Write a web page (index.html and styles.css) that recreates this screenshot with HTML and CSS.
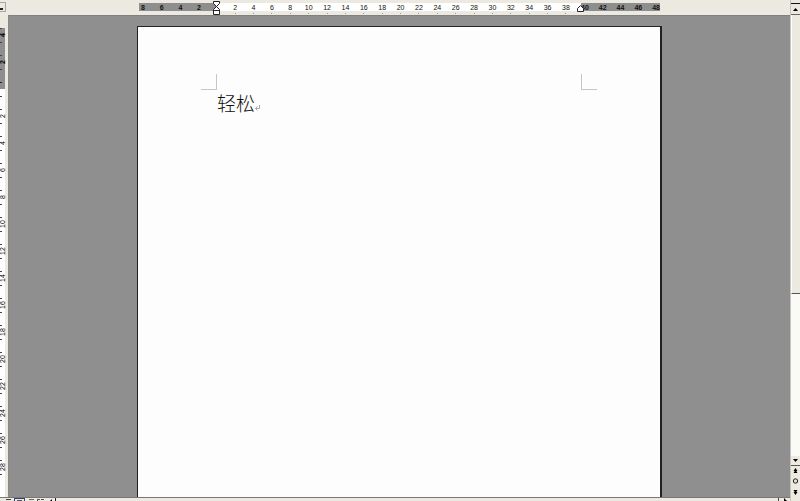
FILE: index.html
```
<!DOCTYPE html>
<html lang="zh-CN">
<head>
<meta charset="UTF-8">
<meta name="viewport" content="width=device-width, initial-scale=1.0">
<title>轻松</title>
<link rel="stylesheet" href="styles.css">
</head>
<body>
    <div class="ruler-row">
        <button class="tab-type" type="button" aria-label="Tab type"></button>
        <div class="ruler">
            <div class="margin left-margin"><span>8</span><span>6</span><span>4</span><span>2</span></div>
            <div class="scale" id="scale"></div>
            <div class="margin right-margin"><span>40</span><span>42</span><span>44</span><span>46</span><span>48</span></div>
            <svg class="indent first" width="7" height="16" viewBox="0 0 7 16">
                <path d="M.5 1.5h6v2l-3 3-3-3zM3.5 6.5l3 3v5h-6v-5zM.5 10.5h6" fill="#fff" stroke="#222"/>
            </svg>
            <svg class="indent last" width="7" height="7" viewBox="0 0 7 7">
                <path d="M3.5.5l3 3v3h-6v-3z" fill="#fff" stroke="#222"/>
            </svg>
        </div>
    </div>

    <div class="workspace">
        <div class="side-ruler">
            <div class="side-margin"><span class="side-mark">4</span><span class="side-mark">2</span></div>
            <div class="side-scale" id="sideScale"></div>
        </div>
        <div class="desk">
            <main class="page">
                <div class="corners"><i class="corner"></i><i class="corner right"></i></div>
                <p class="text">轻松<svg class="mark" width="5" height="6" viewBox="0 0 5 6"><path d="M4.500 0v3.500h-4M2.500 1.500l-2 2 2 2" fill="none" stroke="#aaa"/></svg></p>
            </main>
        </div>
    </div>

    <div class="bottom-bar">
        <div class="views">
            <button type="button" aria-label="Normal view"><svg width="9" height="5"><path d="M2 1.500h5M2 3.500h5" stroke="#444"/></svg></button>
            <button type="button" class="active" aria-label="Page view"><svg width="9" height="5"><path d="M2 1.500h5M2 3.500h5" stroke="#556"/></svg></button>
            <button type="button" aria-label="Outline view"><svg width="9" height="5"><path d="M3 1.500h5M3 3.500h4" stroke="#666"/></svg></button>
            <button type="button" aria-label="Reading view"><svg width="9" height="5"><path d="M1 1.500h3M5 1.500h3M1.500 1v3M5.500 3.500h2" stroke="#555"/></svg></button>
            <button type="button" aria-label="Scroll left"><svg width="9" height="5"><path d="M6 1v4L3 4z"/></svg></button>
        </div>
        <div class="track"></div>
        <button class="scroll-right" type="button" aria-label="Scroll right"><svg width="9" height="5"><path d="M4 1l3 3H4z"/></svg></button>
    </div>

    <div class="scrollbar">
        <div class="split"></div>
        <button type="button" class="up" aria-label="Scroll up"><svg width="7" height="4"><path d="M1 4l2.500-3L6 4z"/></svg></button>
        <div class="thumb"></div>
        <div class="rest"></div>
        <button type="button" class="down" aria-label="Scroll down"><svg width="7" height="4"><path d="M1 0h5L3.500 3z"/></svg></button>
        <button type="button" class="browse" aria-label="Previous page"><svg width="7" height="6"><path d="M1.500 3l2-3 2 3zM1.500 5l2-3 2 3z"/></svg></button>
        <button type="button" class="browse" aria-label="Browse object"><svg width="7" height="6"><circle cx="3.500" cy="3" r="2.200" fill="#ddd" stroke="#222"/></svg></button>
        <button type="button" class="browse" aria-label="Next page"><svg width="7" height="6"><path d="M1.500 1h4l-2 3zM1.500 3h4l-2 3z"/></svg></button>
    </div>

    <script>
        const scale = document.getElementById('scale');
        for (let n = 2; n <= 38; n += 2) {
            const mark = document.createElement('span');
            mark.textContent = n;
            scale.appendChild(mark);
        }

        // the vertical ruler counts every second line, with ticks around each number
        const sideScale = document.getElementById('sideScale');
        for (let n = 2; n <= 28; n += 2) {
            const mark = document.createElement('span');
            mark.className = 'side-mark';
            mark.textContent = n;
            sideScale.appendChild(mark);
        }
    </script>
</body>
</html>
```
FILE: styles.css
```
* {
    box-sizing: border-box;
}

body {
    margin: 0;
    height: 100vh;
    display: grid;
    grid-template-columns: 1fr 10px;
    grid-template-rows: 15px 1fr 4px;
    background: #ece9e1;
    font-family: "Liberation Sans", Arial, sans-serif;
    overflow: hidden;
}

button {
    display: flex;
    align-items: center;
    justify-content: center;
    padding: 0;
    border: none;
    background: #ece9e1;
}

.ruler-row {
    display: flex;
    justify-content: center;
    position: relative;
}

.tab-type {
    position: absolute;
    left: 0;
    top: 2px;
    width: 6px;
    height: 10px;
    border: 1px solid #aaa69e;
    border-left: none;
    justify-content: flex-start;
}

.tab-type::before {
    content: "";
    width: 3px;
    height: 2px;
    margin-top: 4px;
    background: #222;
}

.ruler {
    display: flex;
    position: relative;
    width: 521px;
    height: 8px;
    margin-top: 3px;
    margin-left: 9px;
    font-size: 7px;
    line-height: 9px;
    color: #111;
}

.margin {
    display: flex;
    justify-content: space-between;
    background: #8e8e8e;
}

.left-margin {
    width: 78px;
    padding-left: 2px;
    padding-right: 16px;
    font-weight: bold;
}

.right-margin {
    width: 79px;
    font-weight: bold;
}

.scale {
    flex: 1;
    display: flex;
    padding: 0 6px 0 9px;
    background: #fff;
}

.scale span {
    flex: 1;
    text-align: center;
    height: 11px;
    background: linear-gradient(#999, #999) center bottom / 1px 1px no-repeat;
}

.indent {
    position: absolute;
}

.first {
    left: 74px;
    top: -3px;
}

.last {
    left: 438px;
    top: 2px;
}

.workspace {
    display: flex;
    grid-column: 1;
    min-height: 0;
    overflow: hidden;
}

.side-ruler {
    display: flex;
    flex-direction: column;
    width: 8px;
    padding-top: 13px;
    overflow: hidden;
}

.side-margin {
    display: flex;
    flex: none;
    flex-direction: column;
    justify-content: flex-end;
    width: 5px;
    height: 61px;
    padding-bottom: 13px;
    font-weight: bold;
    background: linear-gradient(#222, #222) left 54px / 2px 1px no-repeat #8e8e8e;
}

.side-margin .side-mark {
    flex: none;
}

.side-scale {
    flex: 1;
    width: 5px;
    padding-top: 14px;
    background: linear-gradient(#444, #444) left 7px / 2px 1px no-repeat #fff;
}

.side-mark {
    display: block;
    width: 5px;
    height: 27px;
    font-size: 7px;
    line-height: 5px;
    text-align: center;
    writing-mode: vertical-rl;
    transform: rotate(180deg);
    background: linear-gradient(#444, #444) right 6px / 2px 1px no-repeat, linear-gradient(#444, #444) right 20px / 2px 1px no-repeat;
}

.desk {
    flex: 1;
    padding: 10px 128px 0;
    background: #8f8f8f;
    border-top: 1px solid #808080;
    border-left: 1px solid #8f8984;
    display: flex;
}

.page {
    flex: 1;
    background: #fdfdfd;
    border: 1px solid #222;
    border-right-width: 2px;
    border-bottom: none;
    padding: 47px 63px 0;
}

.corners {
    display: flex;
    justify-content: space-between;
}

.corner {
    width: 16px;
    height: 16px;
    border-right: 1px solid #c6c6c6;
    border-bottom: 1px solid #c6c6c6;
}

.right {
    border-right: none;
    border-left: 1px solid #c6c6c6;
}

.text {
    margin: 4px 16px;
    font-family: "Liberation Serif", "Noto Sans CJK SC", sans-serif;
    font-size: 19px;
    font-weight: 300;
    line-height: 22px;
    color: #111;
}

.bottom-bar {
    grid-column: 1;
    grid-row: 3;
    display: flex;
    border-top: 1px solid #777;
    overflow: hidden;
}

.views {
    display: flex;
    gap: 1px;
    padding-left: 4px;
    width: 56px;
    border-right: 1px solid #222;
}

.views button {
    width: 9px;
    height: 5px;
}

.views .active {
    width: 11px;
    border: 1px solid #34446e;
    border-bottom: none;
}

.track {
    flex: 1;
}

.scroll-right {
    width: 12px;
    border-left: 1px solid #444;
}

.scrollbar {
    grid-column: 2;
    grid-row: 1 / 4;
    display: flex;
    flex-direction: column;
    border-left: 1px solid #c9c5bc;
}

.split {
    height: 4px;
    border-bottom: 1px solid #111;
}

.up {
    height: 11px;
    border-bottom: 1px solid #666;
}

.thumb {
    flex: 278;
    border-left: 1px solid #fff;
    border-bottom: 1px solid #555;
}

.rest {
    flex: 162;
    background: #fafaf7;
}

.down {
    height: 10px;
    border-bottom: 1px solid #555;
}

.browse {
    height: 10px;
}

.browse:last-child {
    height: 15px;
    padding-bottom: 3px;
}
```
